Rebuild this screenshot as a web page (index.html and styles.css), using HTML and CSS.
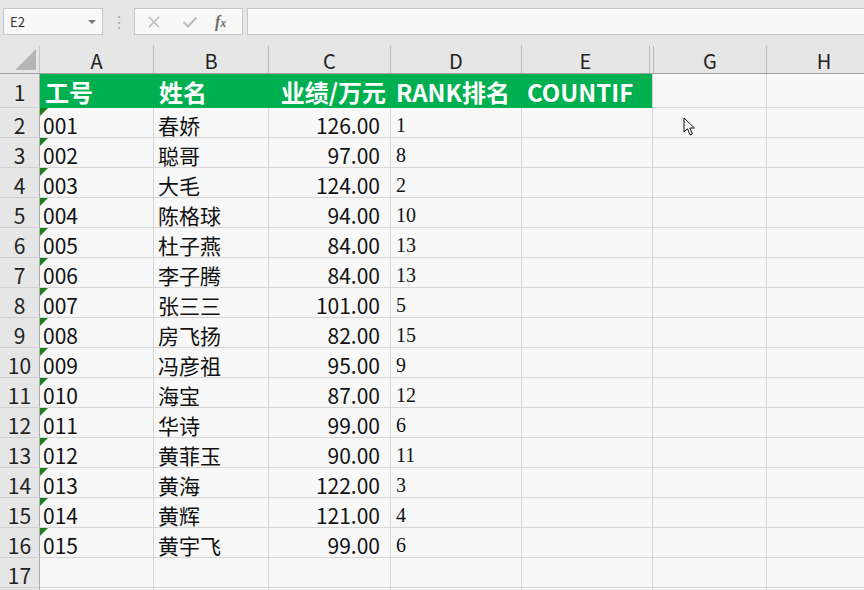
FILE: index.html
```html
<!DOCTYPE html>
<html lang="zh-CN">
<head>
    <meta charset="UTF-8">
    <title>排名</title>
    <link rel="stylesheet" href="styles.css">
</head>
<body>
    <div class="toolbar">
        <div class="namebox">
            <span>E2</span>
            <span class="caret"></span>
        </div>
        <div class="grip">⋮</div>
        <div class="fx-box">
            <svg class="ico" width="14" height="14" viewBox="0 0 14 14"><path d="M2 2 L12 12 M12 2 L2 12" stroke="#bcbcbc" stroke-width="1.6" fill="none"/></svg>
            <svg class="ico" width="16" height="14" viewBox="0 0 16 14"><path d="M1.5 7 L6 11.5 L14.5 2.5" stroke="#bcbcbc" stroke-width="2" fill="none"/></svg>
            <span class="fx">f<sub>x</sub></span>
        </div>
        <div class="formula"></div>
    </div>

    <div class="col-head">
        <div class="corner"><span class="tri"></span></div>
        <div class="ch w-a">A</div>
        <div class="ch w-b">B</div>
        <div class="ch w-c">C</div>
        <div class="ch w-d">D</div>
        <div class="ch w-e">E</div>
        <div class="ch w-f"></div>
        <div class="ch w-g">G</div>
        <div class="ch w-h">H</div>
    </div>

    <div class="sheet">
        <div class="rn">1</div>
        <div class="c hd">工号</div><div class="c hd">姓名</div><div class="c hd r">业绩/万元</div><div class="c hd">RANK排名</div><div class="c hd">COUNTIF</div><div class="c"></div><div class="c"></div>

        <div class="rn">2</div>
        <div class="c txt">001</div><div class="c">春娇</div><div class="c num">126.00</div><div class="c rk">1</div><div class="c"></div><div class="c"></div><div class="c"></div>
        <div class="rn">3</div>
        <div class="c txt">002</div><div class="c">聪哥</div><div class="c num">97.00</div><div class="c rk">8</div><div class="c"></div><div class="c"></div><div class="c"></div>
        <div class="rn">4</div>
        <div class="c txt">003</div><div class="c">大毛</div><div class="c num">124.00</div><div class="c rk">2</div><div class="c"></div><div class="c"></div><div class="c"></div>
        <div class="rn">5</div>
        <div class="c txt">004</div><div class="c">陈格球</div><div class="c num">94.00</div><div class="c rk">10</div><div class="c"></div><div class="c"></div><div class="c"></div>
        <div class="rn">6</div>
        <div class="c txt">005</div><div class="c">杜子燕</div><div class="c num">84.00</div><div class="c rk">13</div><div class="c"></div><div class="c"></div><div class="c"></div>
        <div class="rn">7</div>
        <div class="c txt">006</div><div class="c">李子腾</div><div class="c num">84.00</div><div class="c rk">13</div><div class="c"></div><div class="c"></div><div class="c"></div>
        <div class="rn">8</div>
        <div class="c txt">007</div><div class="c">张三三</div><div class="c num">101.00</div><div class="c rk">5</div><div class="c"></div><div class="c"></div><div class="c"></div>
        <div class="rn">9</div>
        <div class="c txt">008</div><div class="c">房飞扬</div><div class="c num">82.00</div><div class="c rk">15</div><div class="c"></div><div class="c"></div><div class="c"></div>
        <div class="rn">10</div>
        <div class="c txt">009</div><div class="c">冯彦祖</div><div class="c num">95.00</div><div class="c rk">9</div><div class="c"></div><div class="c"></div><div class="c"></div>
        <div class="rn">11</div>
        <div class="c txt">010</div><div class="c">海宝</div><div class="c num">87.00</div><div class="c rk">12</div><div class="c"></div><div class="c"></div><div class="c"></div>
        <div class="rn">12</div>
        <div class="c txt">011</div><div class="c">华诗</div><div class="c num">99.00</div><div class="c rk">6</div><div class="c"></div><div class="c"></div><div class="c"></div>
        <div class="rn">13</div>
        <div class="c txt">012</div><div class="c">黄菲玉</div><div class="c num">90.00</div><div class="c rk">11</div><div class="c"></div><div class="c"></div><div class="c"></div>
        <div class="rn">14</div>
        <div class="c txt">013</div><div class="c">黄海</div><div class="c num">122.00</div><div class="c rk">3</div><div class="c"></div><div class="c"></div><div class="c"></div>
        <div class="rn">15</div>
        <div class="c txt">014</div><div class="c">黄辉</div><div class="c num">121.00</div><div class="c rk">4</div><div class="c"></div><div class="c"></div><div class="c"></div>
        <div class="rn">16</div>
        <div class="c txt">015</div><div class="c">黄宇飞</div><div class="c num">99.00</div><div class="c rk">6</div><div class="c"></div><div class="c"></div><div class="c"></div>
        <div class="rn">17</div>
        <div class="c"></div><div class="c"></div><div class="c"></div><div class="c"></div><div class="c"></div><div class="c"></div><div class="c"></div>
        <div class="rn"></div>
        <div class="c"></div><div class="c"></div><div class="c"></div><div class="c"></div><div class="c"></div><div class="c"></div><div class="c"></div>
    </div>

    <svg class="cursor" width="14" height="20" viewBox="0 0 14 20">
        <path d="M1 1 L1 15 L4.5 11.8 L7.2 18 L9.4 17 L6.8 11 L11.5 11 Z" fill="#fff" stroke="#111" stroke-width="1"/>
    </svg>
</body>
</html>
```

FILE: styles.css
```css
body {
    margin: 0;
    width: 864px;
    height: 590px;
    overflow: hidden;
    background-color: #e6e6e6;
    font-family: "Noto Sans CJK SC", "Noto Sans", sans-serif;
    color: #111;
    position: relative;
}

/* 公式栏 */
.toolbar {
    height: 46px;
    display: flex;
    align-items: flex-start;
    padding-top: 8px;
    box-sizing: border-box;
}
.namebox {
    margin-left: 3px;
    width: 100px;
    height: 27px;
    box-sizing: border-box;
    background-color: #f8f8f8;
    border: 1px solid #c6c6c6;
    display: flex;
    align-items: center;
    justify-content: space-between;
    padding: 0 6px 0 6px;
    font-size: 13px;
    color: #333;
}
.caret {
    width: 0;
    height: 0;
    border-left: 4px solid transparent;
    border-right: 4px solid transparent;
    border-top: 4px solid #777;
}
.grip {
    width: 31px;
    text-align: center;
    color: #a8a8a8;
    font-size: 16px;
    line-height: 27px;
}
.fx-box {
    width: 109px;
    height: 27px;
    box-sizing: border-box;
    background-color: #f8f8f8;
    border: 1px solid #c6c6c6;
    display: flex;
    align-items: center;
    padding-left: 12px;
    gap: 21px;
}
.fx {
    font-family: "Liberation Serif", serif;
    font-style: italic;
    font-weight: bold;
    font-size: 16px;
    color: #6a6a6a;
    margin-left: -4px;
}
.fx sub {
    font-size: 12px;
    vertical-align: 0;
}
.formula {
    flex: 1;
    margin-left: 4px;
    height: 27px;
    box-sizing: border-box;
    background-color: #f8f8f8;
    border: 1px solid #c6c6c6;
    border-right: none;
}

/* 列标题 */
.col-head {
    display: flex;
    height: 28px;
    border-bottom: 1px solid #9e9e9e;
    box-sizing: border-box;
}
.corner {
    width: 40px;
    flex-shrink: 0;
    position: relative;
    border-right: 1px solid #c6c6c6;
    box-sizing: border-box;
}
.tri {
    position: absolute;
    right: 3px;
    bottom: 3px;
    width: 0;
    height: 0;
    border-left: 21px solid transparent;
    border-bottom: 21px solid #b5b5b5;
}
.ch {
    flex-shrink: 0;
    box-sizing: border-box;
    border-right: 1px solid #b8b8b8;
    text-align: center;
    font-size: 20px;
    line-height: 29px;
    color: #222;
}
.w-a { width: 114px; }
.w-b { width: 115px; }
.w-c { width: 122px; }
.w-d { width: 131px; }
.w-e { width: 128px; }
.w-f { width: 4px; }
.w-g { width: 113px; }
.w-h { width: 115px; }

/* 表格 */
.sheet {
    display: grid;
    grid-template-columns: 40px 114px 115px 122px 131px 131px 114px 115px;
    grid-template-rows: 34px;
    grid-auto-rows: 30px;
}
.rn {
    box-sizing: border-box;
    border-right: 1px solid #ababab;
    border-bottom: 1px solid #d0d0d0;
    background-color: #e6e6e6;
    text-align: center;
    font-size: 21px;
    line-height: 30px;
    padding-top: 2px;
    color: #222;
}
.sheet > .rn:first-child {
    line-height: 34px;
    padding-top: 1px;
}
.c {
    box-sizing: border-box;
    border-right: 1px solid #d6d6d6;
    border-bottom: 1px solid #d6d6d6;
    background-color: #f8f8f8;
    font-size: 21px;
    line-height: 30px;
    padding-top: 2px;
    padding-left: 4px;
    white-space: nowrap;
    position: relative;
}
.hd {
    background-color: #00b050;
    border-color: #00b050;
    color: #fff;
    font-weight: bold;
    font-size: 24px;
    line-height: 34px;
    padding-top: 1px;
    padding-left: 5px;
}
.sheet > .c:nth-child(6) {
    background-color: #00b050;
    border-bottom-color: #00b050;
    border-right-color: #d6d6d6;
}
.r {
    text-align: right;
    padding-left: 0;
    padding-right: 4px;
}
.txt {
    padding-left: 3px;
}
.txt::before {
    content: "";
    position: absolute;
    left: 0;
    top: 0;
    border-top: 8px solid #1b7d1b;
    border-right: 8px solid transparent;
}
.num {
    text-align: right;
    padding-right: 10px;
}
.rk {
    font-family: "Liberation Serif", serif;
    font-size: 20px;
    padding-left: 5px;
}

.cursor {
    position: absolute;
    left: 683px;
    top: 117px;
}
```
